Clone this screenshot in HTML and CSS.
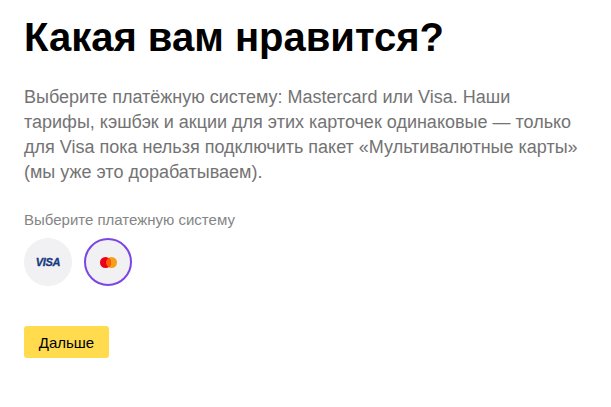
FILE: index.html
```html
<!DOCTYPE html>
<html lang="ru">
<head>
  <meta charset="UTF-8" />
  <title>Какая вам нравится?</title>
  <link rel="stylesheet" href="styles.css">
</head>
<body>
  <main class="page">
    <h1 class="title">Какая вам нравится?</h1>
    <p class="lead">Выберите платёжную систему: Mastercard или Visa. Наши тарифы, кэшбэк и акции для этих карточек одинаковые — только для Visa пока нельзя подключить пакет «Мультивалютные карты» (мы уже это дорабатываем).</p>

    <div class="field-label">Выберите платежную систему</div>
    <div class="systems">
      <button class="system" type="button"><span class="visa">VISA</span></button>
      <button class="system system-active" type="button">
        <svg width="17" height="11" viewBox="0 0 17 11" aria-label="Mastercard">
          <circle cx="11.5" cy="5.5" r="5.5" fill="#f79e1b"/>
          <circle cx="5.5" cy="5.5" r="5.5" fill="#eb001b"/>
          <path d="M8.5 .9a5.5 5.5 0 0 1 0 9.2a5.5 5.5 0 0 1 0-9.2z" fill="#ff5f00"/>
        </svg>
      </button>
    </div>

    <button class="next" type="button">Дальше</button>
  </main>
</body>
</html>
```

FILE: styles.css
```css
body {
  margin: 0;
  background-color: #fff;
  font-family: "Liberation Sans", Arial, sans-serif;
  color: #000;
}
.page {
  padding: 14px 24px 0;
}
.title {
  margin: 0 0 25px;
  font-size: 40px;
  line-height: 46px;
  font-weight: bold;
}
.lead {
  margin: 0 0 26px;
  max-width: 560px;
  font-size: 18px;
  line-height: 25px;
  color: #737373;
}
.field-label {
  margin-bottom: 9px;
  font-size: 15px;
  line-height: 18px;
  color: #858585;
}
.systems {
  display: flex;
  gap: 12px;
  margin-bottom: 40px;
}
.system {
  display: flex;
  align-items: center;
  justify-content: center;
  box-sizing: border-box;
  width: 48px;
  height: 48px;
  padding: 0;
  border: none;
  border-radius: 50%;
  background-color: #f1f1f3;
}
.system-active {
  border: 2px solid #7b46e3;
}
.visa {
  font-size: 11px;
  font-weight: bold;
  font-style: italic;
  letter-spacing: -0.3px;
  color: #17397f;
  -webkit-text-stroke: 0.3px #17397f;
}
.next {
  display: block;
  width: 85px;
  height: 32px;
  padding: 0;
  border: none;
  border-radius: 3px;
  background-color: #ffdb4d;
  font-family: inherit;
  font-size: 15px;
  color: #000;
}
```
